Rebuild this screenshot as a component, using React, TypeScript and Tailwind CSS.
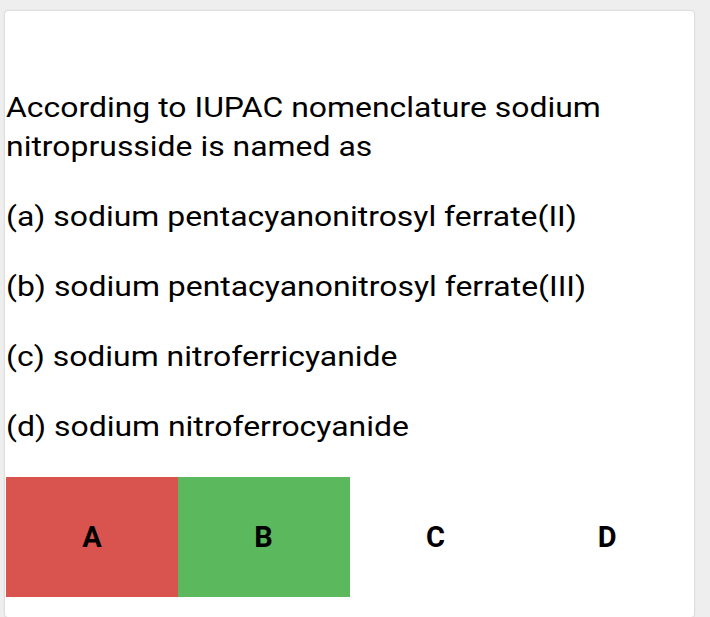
export default function App() {
  const options = [
    "(a) sodium pentacyanonitrosyl ferrate(II)",
    "(b) sodium pentacyanonitrosyl ferrate(III)",
    "(c) sodium nitroferricyanide",
    "(d) sodium nitroferrocyanide",
  ];
  const buttons = [
    { label: "A", bg: "bg-[#d9534f]" },
    { label: "B", bg: "bg-[#5cb85c]" },
    { label: "C", bg: "bg-white" },
    { label: "D", bg: "bg-white" },
  ];

  return (
    <div className="min-h-[617px] bg-[#eeeeee] pt-[11px] pl-[5px] pr-[16px] font-['Roboto',sans-serif] text-black">
      <div className="bg-white rounded-[3px] shadow-[0_0_2px_rgba(0,0,0,0.25)] h-[606px] overflow-hidden px-[1px] pt-[77px]">
        {/* text in the shot is a little wider than plain Roboto */}
        <div className="w-[600px] origin-left scale-x-[1.14] text-[28px] leading-[39px]">
          <p className="mb-[31px]">
            According to IUPAC nomenclature sodium nitroprusside is named as
          </p>
          {options.map((o) => (
            <p key={o} className="mb-[31px]">
              {o}
            </p>
          ))}
        </div>
        <div className="grid grid-cols-4">
          {buttons.map((b) => (
            <div
              key={b.label}
              className={`${b.bg} h-[120px] flex items-center justify-center text-[29px] font-bold pt-[2px]`}
            >
              {b.label}
            </div>
          ))}
        </div>
      </div>
    </div>
  );
}
